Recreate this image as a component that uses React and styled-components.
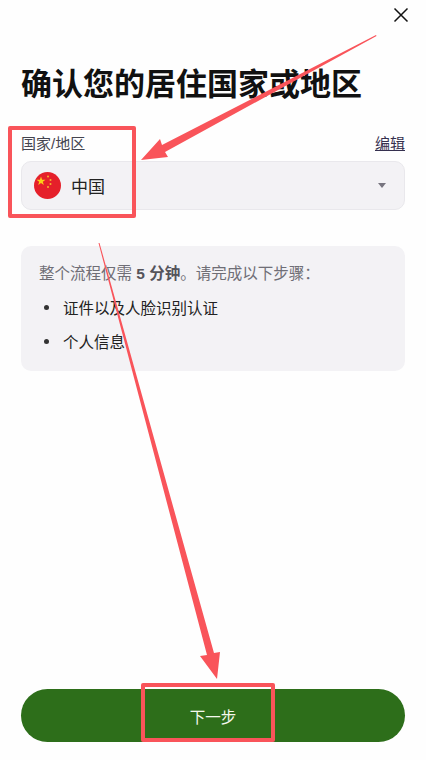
import styled, { createGlobalStyle } from 'styled-components';

const GlobalStyle = createGlobalStyle`
  html, body {
    margin: 0;
    padding: 0;
    background: #fefefe;
  }
  * {
    box-sizing: border-box;
  }
`;

const Page = styled.div`
  position: relative;
  width: 426px;
  height: 760px;
  overflow: hidden;
  display: flex;
  flex-direction: column;
  padding: 0 21px 18px;
  background: #fefefe;
  font-family: "Liberation Sans", "Noto Sans CJK SC", sans-serif;
`;

const TopBar = styled.div`
  display: flex;
  justify-content: flex-end;
  height: 30px;
  padding-top: 7px;
  margin-right: -4px;
`;

const CloseButton = styled.button`
  width: 16px;
  height: 16px;
  padding: 0;
  border: none;
  background: none;
  color: #111;
`;

const Title = styled.h1`
  margin: 36px 0 0;
  font-size: 31px;
  line-height: 38px;
  font-weight: 700;
  color: #111;
  white-space: nowrap;
`;

const FieldHead = styled.div`
  display: flex;
  justify-content: space-between;
  align-items: center;
  margin-top: 27px;
  height: 22px;
  font-size: 15px;
`;

const FieldLabel = styled.span`
  color: #44444f;
`;

const EditLink = styled.a`
  color: #35304f;
  text-decoration: underline;
`;

const Select = styled.div`
  display: flex;
  align-items: center;
  height: 49px;
  margin-top: 8px;
  padding: 0 18px 0 12px;
  background: #f3f2f5;
  border: 1px solid #e9e8ec;
  border-radius: 10px;
`;

const FlagIcon = styled.svg`
  width: 27px;
  height: 27px;
  flex: none;
`;

const SelectValue = styled.span`
  flex: 1;
  margin-left: 10px;
  font-size: 17px;
  color: #222;
`;

const Caret = styled.span`
  width: 0;
  height: 0;
  border-left: 4px solid transparent;
  border-right: 4px solid transparent;
  border-top: 5px solid #77757f;
`;

const InfoBox = styled.div`
  margin-top: 36px;
  height: 125px;
  padding: 17px 18px 0;
  background: #f3f2f5;
  border-radius: 10px;
`;

const InfoText = styled.p`
  margin: 0;
  height: 22px;
  font-size: 15.5px;
  line-height: 22px;
  color: #6f6e76;
  white-space: nowrap;

  strong {
    font-weight: 700;
    color: #55545b;
  }
`;

const StepList = styled.ul`
  list-style: none;
  margin: 11px 0 0;
  padding: 0;
  display: flex;
  flex-direction: column;
  gap: 12px;
`;

const StepItem = styled.li`
  display: flex;
  align-items: center;
  height: 22px;
  font-size: 15.5px;
  color: #222;

  &::before {
    content: '';
    width: 5px;
    height: 5px;
    margin: 0 14px 0 5px;
    border-radius: 50%;
    background: #333;
  }
`;

const NextButton = styled.button`
  margin-top: auto;
  height: 53px;
  border: none;
  border-radius: 27px;
  background: #2d6e1a;
  color: #f4f8ee;
  font-family: inherit;
  font-size: 15.5px;
`;

// red markup drawn on top of the screenshot
const MarkBox = styled.div`
  position: absolute;
  left: ${p => p.$x}px;
  top: ${p => p.$y}px;
  width: ${p => p.$w}px;
  height: ${p => p.$h}px;
  border: 4px solid #f9545a;
  border-radius: 2px;
  pointer-events: none;
`;

const ArrowLayer = styled.svg`
  position: absolute;
  left: 0;
  top: 0;
  width: 426px;
  height: 760px;
  pointer-events: none;
`;

function ChinaFlag() {
  return (
    <FlagIcon viewBox="0 0 27 27">
      <circle cx="13.5" cy="13.5" r="13.5" fill="#e5202a" />
      <polygon
        points="7,4.5 8.1,7.7 11.5,7.7 8.8,9.7 9.8,13 7,11 4.2,13 5.2,9.7 2.5,7.7 5.9,7.7"
        fill="#fbd116"
      />
      <circle cx="14" cy="4.5" r="1" fill="#f7b52b" />
      <circle cx="16.5" cy="8" r="1" fill="#f7b52b" />
      <circle cx="16.5" cy="12" r="1" fill="#f7b52b" />
      <circle cx="14" cy="15" r="1" fill="#f7b52b" />
    </FlagIcon>
  );
}

export default function App() {
  return (
    <>
      <GlobalStyle />
      <Page>
        <TopBar>
          <CloseButton>
            <svg viewBox="0 0 16 16" width="16" height="16">
              <path d="M1.5 1.5 L14.5 14.5 M14.5 1.5 L1.5 14.5" stroke="currentColor" strokeWidth="1.5" fill="none" />
            </svg>
          </CloseButton>
        </TopBar>
        <Title>确认您的居住国家或地区</Title>
        <FieldHead>
          <FieldLabel>国家/地区</FieldLabel>
          <EditLink>编辑</EditLink>
        </FieldHead>
        <Select>
          <ChinaFlag />
          <SelectValue>中国</SelectValue>
          <Caret />
        </Select>
        <InfoBox>
          <InfoText>
            整个流程仅需 <strong>5 分钟</strong>。请完成以下步骤：
          </InfoText>
          <StepList>
            <StepItem>证件以及人脸识别认证</StepItem>
            <StepItem>个人信息</StepItem>
          </StepList>
        </InfoBox>
        <NextButton>下一步</NextButton>

        <MarkBox $x={8} $y={126} $w={128} $h={92} />
        <MarkBox $x={141} $y={683} $w={134} $h={59} />
        <ArrowLayer viewBox="0 0 426 760">
          <polygon points="376,35 376.5,36 165,152 168,157 141,160 160,139 162,145" fill="#f9545a" />
          <polygon points="98.5,243 99.5,243 214,653 220,652 217,679 200,656 207,655" fill="#f9545a" />
        </ArrowLayer>
      </Page>
    </>
  );
}
